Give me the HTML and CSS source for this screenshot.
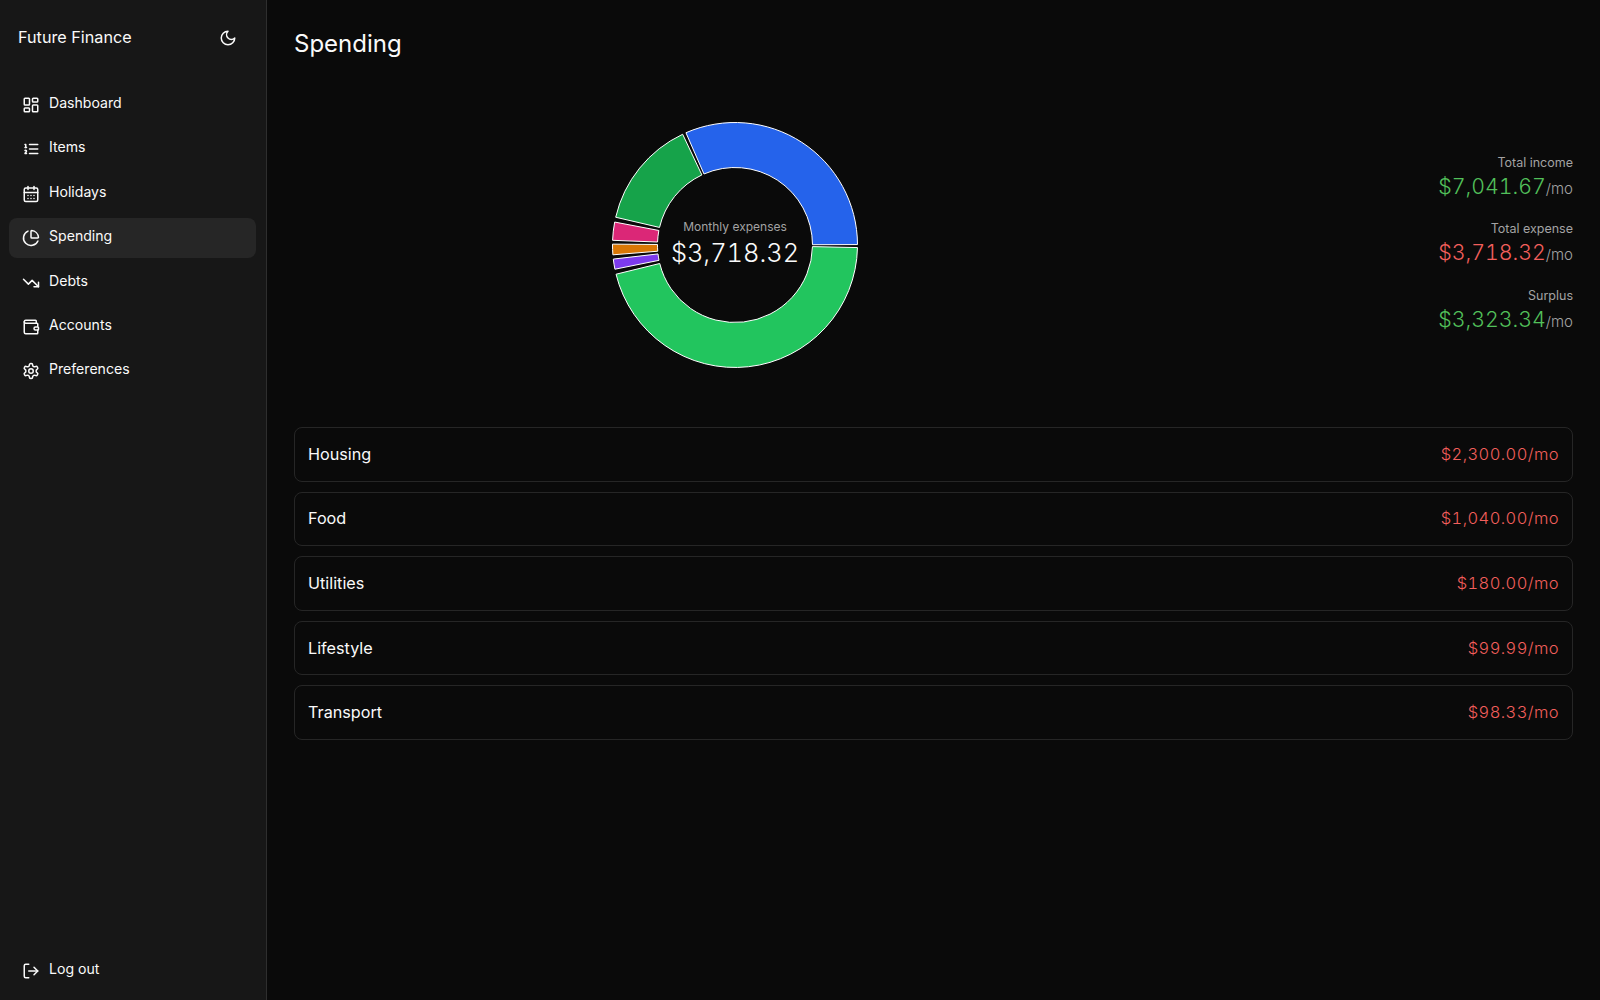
FILE: index.html
```html
<!DOCTYPE html>
<html lang="en">
<head>
  <meta charset="UTF-8">
  <title>Spending - Future Finance</title>
  <link rel="stylesheet" href="styles.css">
</head>
<body>

<div class="app">
  <aside class="sidebar">
    <div class="brand">
      <span class="brand-name">Future Finance</span>
      <svg class="icon theme-icon" viewBox="0 0 24 24"><path d="M12 3a6 6 0 0 0 9 9 9 9 0 1 1-9-9Z"/></svg>
    </div>

    <nav class="nav">
      <a class="nav-item">
        <svg class="icon" viewBox="0 0 24 24"><rect width="7" height="9" x="3" y="3" rx="1"/><rect width="7" height="5" x="14" y="3" rx="1"/><rect width="7" height="9" x="14" y="12" rx="1"/><rect width="7" height="5" x="3" y="16" rx="1"/></svg>
        <span class="nav-label">Dashboard</span>
      </a>
      <a class="nav-item">
        <svg class="icon" viewBox="0 0 24 24"><path d="M10 12h11"/><path d="M10 18h11"/><path d="M10 6h11"/><path d="M4 10h2"/><path d="M4 6h1v4"/><path d="M6 18H4c0-1 2-2 2-3s-1-1.5-2-1"/></svg>
        <span class="nav-label">Items</span>
      </a>
      <a class="nav-item">
        <svg class="icon" viewBox="0 0 24 24"><path d="M8 2v4"/><path d="M16 2v4"/><rect width="18" height="18" x="3" y="4" rx="2"/><path d="M3 10h18"/><path d="M8 14h.01"/><path d="M12 14h.01"/><path d="M16 14h.01"/><path d="M8 18h.01"/><path d="M12 18h.01"/><path d="M16 18h.01"/></svg>
        <span class="nav-label">Holidays</span>
      </a>
      <a class="nav-item active">
        <svg class="icon" viewBox="0 0 24 24"><path d="M21 12c.552 0 1.005-.449.95-.998a10 10 0 0 0-8.953-8.951c-.55-.055-.998.398-.998.95v8a1 1 0 0 0 1 1z"/><path d="M21.21 15.89A10 10 0 1 1 8 2.83"/></svg>
        <span class="nav-label">Spending</span>
      </a>
      <a class="nav-item">
        <svg class="icon" viewBox="0 0 24 24"><polyline points="22 17 13.5 8.5 8.5 13.5 2 7"/><polyline points="16 17 22 17 22 11"/></svg>
        <span class="nav-label">Debts</span>
      </a>
      <a class="nav-item">
        <svg class="icon" viewBox="0 0 24 24"><path d="M19 7V4a1 1 0 0 0-1-1H5a2 2 0 0 0 0 4h15a1 1 0 0 1 1 1v4h-3a2 2 0 0 0 0 4h3a1 1 0 0 0 1-1v-2a1 1 0 0 0-1-1"/><path d="M3 5v14a2 2 0 0 0 2 2h15a1 1 0 0 0 1-1v-4"/></svg>
        <span class="nav-label">Accounts</span>
      </a>
      <a class="nav-item">
        <svg class="icon" viewBox="0 0 24 24"><path d="M12.22 2h-.44a2 2 0 0 0-2 2v.18a2 2 0 0 1-1 1.73l-.43.25a2 2 0 0 1-2 0l-.15-.08a2 2 0 0 0-2.73.73l-.22.38a2 2 0 0 0 .73 2.73l.15.1a2 2 0 0 1 1 1.72v.51a2 2 0 0 1-1 1.74l-.15.09a2 2 0 0 0-.73 2.73l.22.38a2 2 0 0 0 2.73.73l.15-.08a2 2 0 0 1 2 0l.43.25a2 2 0 0 1 1 1.73V20a2 2 0 0 0 2 2h.44a2 2 0 0 0 2-2v-.18a2 2 0 0 1 1-1.73l.43-.25a2 2 0 0 1 2 0l.15.08a2 2 0 0 0 2.73-.73l.22-.39a2 2 0 0 0-.73-2.73l-.15-.08a2 2 0 0 1-1-1.74v-.5a2 2 0 0 1 1-1.74l.15-.09a2 2 0 0 0 .73-2.73l-.22-.38a2 2 0 0 0-2.73-.73l-.15.08a2 2 0 0 1-2 0l-.43-.25a2 2 0 0 1-1-1.73V4a2 2 0 0 0-2-2z"/><circle cx="12" cy="12" r="3"/></svg>
        <span class="nav-label">Preferences</span>
      </a>
    </nav>

    <a class="nav-item logout">
      <svg class="icon" viewBox="0 0 24 24"><path d="M9 21H5a2 2 0 0 1-2-2V5a2 2 0 0 1 2-2h4"/><polyline points="16 17 21 12 16 7"/><line x1="21" x2="9" y1="12" y2="12"/></svg>
      <span class="nav-label">Log out</span>
    </a>
  </aside>

  <main class="main">
    <h1 class="page-title">Spending</h1>

    <section class="overview">
      <div class="chart-wrap">
        <div class="donut">
          <svg id="donut" width="250" height="250" viewBox="-125 -125 250 250"></svg>
          <div class="donut-center">
            <div class="donut-label">Monthly expenses</div>
            <div class="donut-total">$3,718.32</div>
          </div>
        </div>
      </div>

      <div class="totals">
        <div class="total">
          <div class="total-label">Total income</div>
          <div class="total-value"><span class="positive">$7,041.67</span><span class="per">/mo</span></div>
        </div>
        <div class="total">
          <div class="total-label">Total expense</div>
          <div class="total-value"><span class="negative">$3,718.32</span><span class="per">/mo</span></div>
        </div>
        <div class="total">
          <div class="total-label">Surplus</div>
          <div class="total-value"><span class="positive">$3,323.34</span><span class="per">/mo</span></div>
        </div>
      </div>
    </section>

    <section class="categories">
      <div class="category"><span>Housing</span><span class="amount">$2,300.00/mo</span></div>
      <div class="category"><span>Food</span><span class="amount">$1,040.00/mo</span></div>
      <div class="category"><span>Utilities</span><span class="amount">$180.00/mo</span></div>
      <div class="category"><span>Lifestyle</span><span class="amount">$99.99/mo</span></div>
      <div class="category"><span>Transport</span><span class="amount">$98.33/mo</span></div>
    </section>
  </main>
</div>

<script>
  // start and end angles in degrees, clockwise from 3 o'clock
  const slices = [
    { from: 1.2, to: 166.2, color: "#22c55e" },
    { from: 168.6, to: 173.4, color: "#7c3aed" },
    { from: 175.4, to: 180.4, color: "#d97706" },
    { from: 182.2, to: 190.8, color: "#db2777" },
    { from: 193.1, to: 244.7, color: "#16a34a" },
    { from: 246.4, to: 359.8, color: "#2563eb" }
  ];
  const outer = 122.5;
  const inner = 77.5;

  function point(radius, angle) {
    const rad = angle * Math.PI / 180;
    return (radius * Math.cos(rad)).toFixed(2) + " " + (radius * Math.sin(rad)).toFixed(2);
  }

  document.getElementById("donut").innerHTML = slices.map((s) => {
    const large = s.to - s.from > 180 ? 1 : 0;
    const d = "M" + point(outer, s.from) +
      " A" + outer + " " + outer + " 0 " + large + " 1 " + point(outer, s.to) +
      " L" + point(inner, s.to) +
      " A" + inner + " " + inner + " 0 " + large + " 0 " + point(inner, s.from) + " Z";
    return '<path d="' + d + '" fill="' + s.color + '" stroke="#fff" stroke-width="1"/>';
  }).join("");
</script>

</body>
</html>
```

FILE: styles.css
```css
* {
  box-sizing: border-box;
}

body {
  margin: 0;
  font-family: Inter, "Liberation Sans", Arial, sans-serif;
  background: #0a0a0a;
  color: #fafafa;
}

.app {
  display: flex;
  height: 1000px;
  overflow: hidden;
}

.icon {
  width: 18px;
  height: 18px;
  flex: none;
  fill: none;
  stroke: currentColor;
  stroke-width: 2;
  stroke-linecap: round;
  stroke-linejoin: round;
}

.sidebar {
  width: 267px;
  flex: none;
  display: flex;
  flex-direction: column;
  padding: 0 10px 9px 9px;
  background: #171717;
  border-right: 1px solid #2e2e2e;
}

.brand {
  display: flex;
  align-items: center;
  justify-content: space-between;
  height: 76px;
  padding: 0 19px 0 9px;
}

.brand-name {
  font-size: 16.2px;
  margin-bottom: 2px;
}

.nav {
  display: flex;
  flex-direction: column;
  gap: 4.4px;
  margin-top: 9px;
}

.nav-item {
  display: flex;
  align-items: center;
  gap: 9px;
  height: 40px;
  padding: 0 13px;
  border-radius: 8px;
  font-size: 14.1px;
}

.nav-label {
  margin-bottom: 5px;
}

.nav-item.active {
  background: #262626;
}

.logout {
  margin-top: auto;
}

.main {
  flex: 1;
  padding: 0 27px 0 27px;
}

.page-title {
  margin: 0;
  padding-top: 28px;
  font-size: 24px;
  line-height: 32px;
  font-weight: 400;
}

.overview {
  display: flex;
  align-items: center;
  justify-content: space-between;
  height: 289px;
  margin-top: 40px;
}

.chart-wrap {
  width: 882px;
  display: flex;
  justify-content: center;
}

.donut {
  position: relative;
  width: 250px;
  height: 250px;
}

.donut svg {
  display: block;
}

.donut-center {
  position: absolute;
  inset: 0;
  display: flex;
  flex-direction: column;
  align-items: center;
  justify-content: center;
  padding-bottom: 3px;
  text-align: center;
}

.donut-label {
  font-size: 12px;
  color: #a3a3a3;
  margin-bottom: 3px;
}

.donut-total {
  font-size: 25.4px;
  font-weight: 300;
  font-variant-numeric: tabular-nums;
}

.totals {
  display: flex;
  flex-direction: column;
  gap: 16.5px;
  margin-top: 1px;
  text-align: right;
}

.total-label {
  font-size: 12.5px;
  line-height: 17px;
  color: #a3a3a3;
}

.total-value {
  font-size: 21.3px;
  font-weight: 300;
  font-variant-numeric: tabular-nums;
  line-height: 30px;
}

.per {
  font-size: 15px;
  color: #a3a3a3;
}

.positive {
  color: #52c05a;
}

.negative {
  color: #f25f5c;
}

.categories {
  display: flex;
  flex-direction: column;
  gap: 10px;
  margin-top: 38px;
}

.category {
  display: flex;
  align-items: center;
  justify-content: space-between;
  height: 54.6px;
  padding: 0 13px 1px;
  border: 1px solid #262626;
  border-radius: 8px;
  font-size: 16.2px;
}

.amount {
  color: #f25f5c;
  font-size: 16.5px;
  font-weight: 300;
  font-variant-numeric: tabular-nums;
  letter-spacing: 0.42px;
}
```
